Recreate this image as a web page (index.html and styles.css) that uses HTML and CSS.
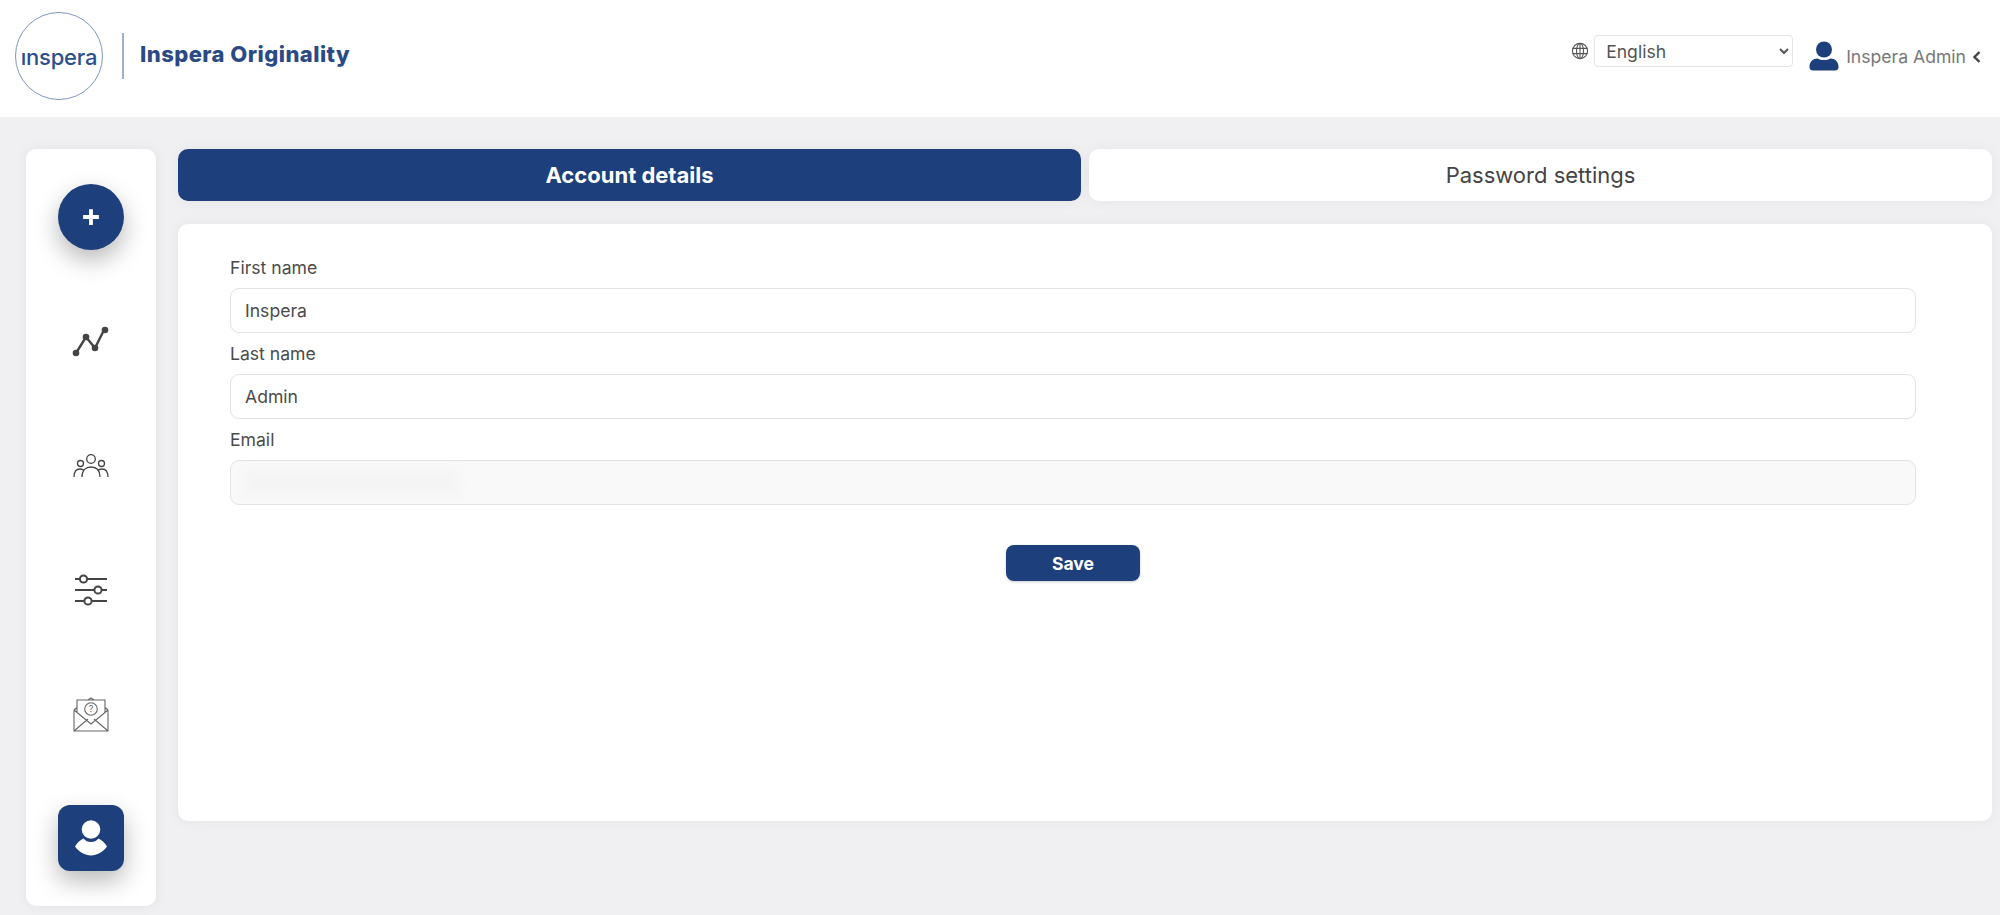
FILE: index.html
```html
<!DOCTYPE html>
<html lang="en">
<head>
<meta charset="utf-8">
<title>Inspera Originality</title>
<link rel="stylesheet" href="styles.css">
</head>
<body>
<header class="topbar">
  <div class="brand">
    <div class="logo-circle"><span class="logo-word">ınspera</span></div>
    <div class="brand-divider"></div>
    <div class="brand-name">Inspera Originality</div>
  </div>
  <div class="top-actions">
    <svg class="globe" viewBox="0 0 18 18" fill="none" stroke="#555" stroke-width="1.1"><circle cx="9" cy="9" r="7.6"/><ellipse cx="9" cy="9" rx="3.5" ry="7.6"/><path d="M1.6 6.4h14.8M1.6 11.6h14.8M9 1.4v15.2"/></svg>
    <select class="lang"><option>English</option></select>
    <svg class="user-icon" viewBox="0 0 30 30" fill="#1d3f7c"><circle cx="15" cy="8.5" r="8"/><path d="M0.5 26c0-5.5 3.500-8.500 8-8.500 2 1 4 1.500 6.500 1.500s4.500-.5 6.500-1.500c4.500 0 8 3 8 8.500 0 2.500-1.500 3.500-3.500 3.500H4c-2 0-3.500-1-3.500-3.500z"/></svg>
    <span class="user-name">Inspera Admin</span>
    <svg class="chevron" viewBox="0 0 9 12" fill="none" stroke="#444" stroke-width="2.4"><path d="M7.500 1 2.500 6l5 5"/></svg>
  </div>
</header>
<main class="layout">
  <nav class="sidebar">
    <a class="nav-btn round"><svg class="ic-plus" viewBox="0 0 16 16" fill="#fff"><path d="M6.300 1h3.400v5.300H15v3.400H9.700V15H6.300V9.700H1V6.300h5.300z"/></svg></a>
    <a class="nav-item"><svg class="ic-trend" viewBox="0 0 38 34" fill="#444" stroke="#444"><path d="M4 28 14 12l9 11L32 5" fill="none" stroke-width="2.400"/><circle cx="4" cy="28" r="3.300" stroke="none"/><circle cx="14" cy="12" r="3.300" stroke="none"/><circle cx="23" cy="23" r="3.300" stroke="none"/><circle cx="33" cy="5" r="3.300" stroke="none"/></svg></a>
    <a class="nav-item"><svg class="ic-people" viewBox="0 0 36 24" fill="none" stroke="#444" stroke-width="1.300"><circle cx="18" cy="5" r="4.300"/><circle cx="7.500" cy="9.500" r="3"/><circle cx="28.500" cy="9.500" r="3"/><path d="M9 23c0-7 4-10 9-10s9 3 9 10M1 23c0-5 2-8 6-8 1.500 0 2.500.4 3.500 1M35 23c0-5-2-8-6-8-1.500 0-2.500.4-3.500 1"/></svg></a>
    <a class="nav-item"><svg class="ic-sliders" viewBox="0 0 34 32" fill="#fff" stroke="#444" stroke-width="2"><path d="M1 5h32M1 16h32M1 27h32" fill="none"/><circle cx="9.500" cy="5" r="3.600"/><circle cx="24" cy="16" r="3.600"/><circle cx="14" cy="27" r="3.600"/></svg></a>
    <a class="nav-item"><svg class="ic-mail" viewBox="0 0 36 36" fill="none" stroke="#666" stroke-width="1.100"><path d="M1 14v21h34V14M1 35l14-12M35 35 21 23M1 14l17 14 17-14M4 17V4h28v13M4 11.500 1 14M32 11.500l3 2.500M15 4l3-2 3 2"/><circle cx="18" cy="13" r="6.300"/><text class="mail-q" x="18" y="16.200" text-anchor="middle">?</text></svg></a>
    <a class="nav-btn square"><svg class="ic-profile" viewBox="0 0 32 36" fill="#fff"><circle cx="16" cy="9.500" r="9.300"/><path d="M0 26.500C2 23 5 20 8.500 18.500c2 2.500 4.500 3.500 7.500 3.500s5.500-1 7.500-3.500C27 20 30 23 32 26.500 28 32 22 35.500 16 35.500S4 32 0 26.500z"/></svg></a>
  </nav>
  <section class="content">
    <div class="tabs">
      <button class="tab active">Account details</button>
      <button class="tab">Password settings</button>
    </div>
    <form class="card">
      <label class="field-label">First name</label>
      <input class="field" value="Inspera">
      <label class="field-label">Last name</label>
      <input class="field" value="Admin">
      <label class="field-label">Email</label>
      <div class="field-wrap">
        <input class="field disabled" disabled>
        <div class="redacted"></div>
      </div>
      <div class="actions"><button type="button" class="save">Save</button></div>
    </form>
  </section>
</main>
</body>
</html>
```

FILE: styles.css
```css
* { box-sizing: border-box; }
html, body { margin: 0; height: 915px; overflow: hidden; }
body { background: #f0f0f2; font-family: Inter, "Liberation Sans", sans-serif; color: #444; }

.topbar { height: 117px; background: #fff; display: flex; justify-content: space-between; padding: 12px 19px 0 15px; }
.brand { display: flex; align-items: flex-start; }
.logo-circle { width: 88px; height: 88px; border-radius: 50%; border: 1px solid #8096c0; display: flex; align-items: center; justify-content: center; }
.logo-word { font-size: 22px; font-weight: 500; color: #2d4f8b; letter-spacing: -.2px; line-height: 1; margin-top: 2px; }
.brand-divider { width: 2px; height: 46px; background: #9fafcd; margin: 21px 16px 0 19px; }
.brand-name { font-size: 22px; font-weight: 800; letter-spacing: .45px; color: #2b4a85; line-height: 26px; margin-top: 29px; white-space: nowrap; }

.top-actions { display: flex; align-items: flex-start; }
.globe { width: 18px; height: 18px; margin: 30px 5px 0 0; }
.lang { width: 199px; height: 32px; margin-top: 23px; padding: 0 7px; background: #fff; border: 1px solid #e4e4e6; border-radius: 4px; font: 17.600px Inter, sans-serif; color: #555; }
.user-icon { width: 30px; height: 30px; margin: 29px 0 0 16px; }
.user-name { font-size: 17.600px; line-height: 20px; color: #77787c; margin: 35px 0 0 7px; white-space: nowrap; }
.chevron { width: 9px; height: 12px; margin: 39px 0 0 6px; }

.layout { display: flex; gap: 22px; padding: 32px 8px 0 26px; }
.sidebar { width: 130px; height: 757px; flex: none; background: #fff; border-radius: 10px; box-shadow: 0 0 14px rgba(0, 0, 0, .06); padding-top: 35px; display: grid; grid-auto-rows: 66px; row-gap: 58.250px; justify-items: center; align-content: start; }
.nav-btn, .nav-item { width: 66px; height: 66px; display: flex; align-items: center; justify-content: center; }
.nav-btn { background: #1d3f7c; box-shadow: 0 10px 24px rgba(0, 0, 0, .28); }
.round { border-radius: 50%; }
.square { border-radius: 12px; }
.ic-plus { width: 18px; height: 18px; }
.ic-trend { width: 38px; height: 34px; margin-top: 1px; }
.ic-people { width: 36px; height: 24px; }
.ic-sliders { width: 34px; height: 32px; margin-top: 1px; }
.ic-mail { width: 36px; height: 36px; }
.mail-q { font-size: 9px; font-family: Inter, sans-serif; fill: #666; stroke: none; }
.ic-profile { width: 32px; height: 36px; }

.content { flex: 1; min-width: 0; }
.tabs { display: flex; gap: 8px; height: 52px; }
.tab { flex: 1; border: 0; border-radius: 10px; background: #fff; font: 22px Inter, sans-serif; color: #444; box-shadow: 0 0 14px rgba(0, 0, 0, .05); padding: 0; }
.tab.active { background: #1d3f7c; color: #fff; font-weight: 700; }

.card { height: 597px; margin-top: 23px; padding: 31px 76px 0 52px; background: #fff; border-radius: 10px; box-shadow: 0 0 14px rgba(0, 0, 0, .05); }
.field-label { display: block; font-size: 17.600px; line-height: 26px; height: 33px; color: #4b4b4b; }
.field { display: block; width: 100%; height: 45px; padding: 0 14px; border: 1px solid #e3e3e5; border-radius: 9px; background: #fff; font: 17.600px Inter, sans-serif; color: #4b4b4b; margin-bottom: 8px; outline: none; }
.field.disabled { background: #f9f9f9; margin-bottom: 0; }
.field-wrap { position: relative; }
.redacted { position: absolute; left: 14px; top: 10px; width: 215px; height: 25px; background: #f4f4f4; filter: blur(5px); }
.actions { display: flex; justify-content: center; margin-top: 40px; }
.save { width: 134px; height: 36px; border: 0; border-radius: 8px; background: #1d3f7c; color: #fff; font: 700 17.600px Inter, sans-serif; box-shadow: 0 1px 3px rgba(0, 0, 0, .2); }
```
